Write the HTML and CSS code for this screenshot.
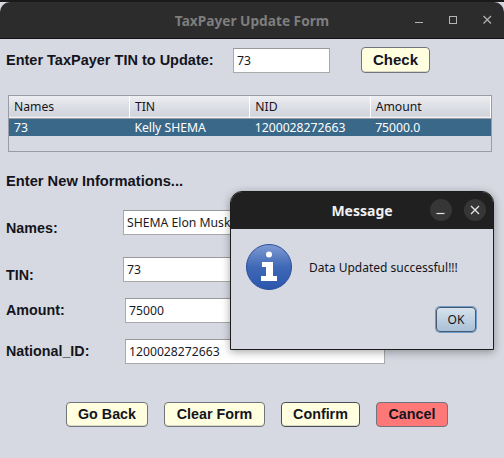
FILE: index.html
```html
<!DOCTYPE html>
<html lang="en">
<head>
    <meta charset="UTF-8">
    <meta name="viewport" content="width=device-width, initial-scale=1.0">
    <title>TaxPayer Update Form</title>
    <link rel="stylesheet" href="styles.css">
</head>
<body>
    <div class="window">
        <!-- Title bar -->
        <div class="titlebar">
            <span class="title">TaxPayer Update Form</span>
            <div class="win-controls">
                <svg width="16" height="16" viewBox="0 0 16 16"><path d="M0 7.500h8" stroke="#b4b4b4" stroke-width="1"/></svg>
                <svg width="16" height="16" viewBox="0 0 16 16"><rect x="0.500" y="1.500" width="7" height="7" fill="none" stroke="#b4b4b4"/></svg>
                <svg width="16" height="16" viewBox="0 0 16 16"><path d="M0.500 1l7.500 7.500M8 1l-7.500 7.500" stroke="#b4b4b4" stroke-width="1.200"/></svg>
            </div>
        </div>

        <!-- Search -->
        <div class="search-row">
            <label class="label search-label">Enter TaxPayer TIN to Update:</label>
            <input class="field search-field" type="text" value="73">
            <button class="btn check-btn">Check</button>
        </div>

        <!-- Table -->
        <div class="table-box">
            <table>
                <thead>
                    <tr>
                        <th>Names</th>
                        <th>TIN</th>
                        <th>NID</th>
                        <th>Amount</th>
                    </tr>
                </thead>
                <tbody>
                    <tr>
                        <td>73</td>
                        <td>Kelly SHEMA</td>
                        <td>1200028272663</td>
                        <td>75000.0</td>
                    </tr>
                </tbody>
            </table>
        </div>

        <h2 class="label heading">Enter New Informations...</h2>

        <!-- Form -->
        <div class="form-row row-names">
            <label class="label row-label">Names:</label>
            <input class="field left-123" type="text" value="SHEMA Elon Musk">
        </div>
        <div class="form-row row-tin">
            <label class="label row-label">TIN:</label>
            <input class="field left-123" type="text" value="73">
        </div>
        <div class="form-row row-amount">
            <label class="label row-label">Amount:</label>
            <input class="field left-125" type="text" value="75000">
        </div>
        <div class="form-row row-nid">
            <label class="label row-label">National_ID:</label>
            <input class="field left-125" type="text" value="1200028272663">
        </div>

        <!-- Buttons -->
        <div class="actions">
            <button class="btn btn-back">Go Back</button>
            <button class="btn btn-clear">Clear Form</button>
            <button class="btn btn-confirm">Confirm</button>
            <button class="btn btn-cancel">Cancel</button>
        </div>

        <!-- Message dialog -->
        <div class="dialog">
            <div class="dialog-bar">
                <span class="dialog-title">Message</span>
                <span class="round-btn round-min">
                    <svg width="22" height="22" viewBox="0 0 22 22"><path d="M6.500 14.500h8" stroke="#e6e6e6" stroke-width="1.200"/></svg>
                </span>
                <span class="round-btn round-close">
                    <svg width="22" height="22" viewBox="0 0 22 22"><path d="M7 7l8 8M15 7l-8 8" stroke="#e6e6e6" stroke-width="1.300"/></svg>
                </span>
            </div>
            <div class="dialog-body">
                <svg class="info-icon" width="46" height="46" viewBox="0 0 46 46">
                    <defs>
                        <linearGradient id="info-fill" x1="0" y1="0" x2="0" y2="1">
                            <stop offset="0" stop-color="#7f9bd2"/>
                            <stop offset="0.500" stop-color="#3f68b6"/>
                            <stop offset="1" stop-color="#2b56ad"/>
                        </linearGradient>
                    </defs>
                    <circle cx="23" cy="23" r="22.500" fill="url(#info-fill)" stroke="#2a4f9c"/>
                    <circle cx="23" cy="10.500" r="3" fill="#fff"/>
                    <path d="M16 18h11v14h4v5H15v-5h5v-9h-4z" fill="#fff"/>
                </svg>
                <span class="dialog-text">Data Updated successful!!!</span>
            </div>
            <div class="dialog-actions">
                <button class="ok-btn">OK</button>
            </div>
        </div>
    </div>
</body>
</html>
```

FILE: styles.css
```css
* {
    box-sizing: border-box;
}

html, body {
    margin: 0;
    padding: 0;
    background-color: #1a1a1a;
}

.window {
    position: relative;
    width: 504px;
    height: 458px;
    padding-top: 2px;
    background-color: #d6d9e1;
    background-clip: content-box;
    font-family: "Noto Sans", sans-serif;
    overflow: hidden;
}

/* Title bar */
.titlebar {
    height: 37px;
    background-color: #2c2c2c;
    border-bottom: 1px solid #111;
    border-radius: 10px 10px 0 0;
    display: flex;
    align-items: center;
    justify-content: center;
}

.title {
    font-size: 13.700px;
    font-weight: bold;
    color: #7e7e7e;
}

.win-controls {
    position: absolute;
    top: 15px;
    left: 415px;
    display: flex;
    gap: 18px;
}

.win-controls svg {
    display: block;
}

/* Shared pieces */
.label {
    font-family: "Liberation Sans", Arial, sans-serif;
    font-size: 14.300px;
    font-weight: bold;
    color: #14141c;
}

.field {
    height: 25px;
    padding: 0 3px;
    border: 1px solid #a9a9a9;
    border-top-color: #999;
    background-color: #fff;
    font-family: "Noto Sans", sans-serif;
    font-size: 12.200px;
    color: #1a1a24;
    outline: none;
}

.btn {
    height: 25px;
    padding: 0 0 2px;
    border: 1px solid #70747c;
    border-radius: 4px;
    background-color: #ffffe0;
    font-family: "Liberation Sans", Arial, sans-serif;
    font-size: 14.300px;
    font-weight: bold;
    color: #14141c;
    box-shadow: inset 0 -1px 0 #d8d8c4;
}

/* Search */
.search-row {
    display: flex;
    align-items: center;
    height: 26px;
    margin-top: 8px;
    padding-left: 6px;
}

.search-label {
    width: 227px;
    font-size: 14.500px;
}

.search-field {
    width: 97px;
}

.check-btn {
    width: 69px;
    height: 26px;
    margin-left: 31px;
    font-size: 15px;
}

/* Table */
.table-box {
    width: 484px;
    height: 57px;
    margin: 22px 0 0 8px;
    border: 1px solid #9a9ca5;
}

table {
    width: 100%;
    border-collapse: collapse;
    table-layout: fixed;
    font-size: 12.200px;
    color: #14141c;
}

th {
    height: 22px;
    padding: 0 5px;
    font-weight: normal;
    text-align: left;
    background: linear-gradient(#eceef2, #dcdee5 50%, #d2d4dc 90%, #fafafa);
    border-right: 1px solid #fff;
    border-bottom: 1px solid #9a9ca5;
}

td {
    height: 17px;
    padding: 0 5px;
    background-color: #3a6889;
    color: #fff;
}

/* Form */
.heading {
    margin: 21px 0 0;
    padding-left: 6px;
    height: 17px;
    line-height: 17px;
    font-size: 14.700px;
}

.form-row {
    display: flex;
    align-items: flex-start;
    height: 25px;
    padding-left: 6px;
}

.row-label {
    width: 117px;
    flex: none;
}

.row-names { margin-top: 20px; }
.row-tin { margin-top: 22px; }
.row-amount { margin-top: 16px; }
.row-nid { margin-top: 16px; }

.row-names .row-label { margin-top: 10px; }
.row-tin .row-label { margin-top: 10px; }
.row-amount .row-label,
.row-nid .row-label { margin-top: 4px; }

.left-123 { width: 262px; }

.left-125 {
    width: 260px;
    margin-left: 2px;
}

/* Buttons */
.actions {
    display: flex;
    gap: 16px;
    margin-top: 38px;
    padding-left: 66px;
}

.btn-back { width: 82px; }
.btn-clear { width: 101px; }
.btn-confirm { width: 79px; border-color: #4a4e56; }
.btn-cancel { width: 72px; background-color: #ff7878; box-shadow: none; }

/* Message dialog */
.dialog {
    position: absolute;
    left: 230px;
    top: 191px;
    width: 264px;
    height: 159px;
    background-color: #d6d9e1;
    border: 1px solid #1c1c1c;
    border-radius: 12px 12px 0 0;
    box-shadow: 0 2px 8px rgba(0, 0, 0, 0.35);
}

.dialog-bar {
    position: relative;
    height: 37px;
    background-color: #202020;
    border-radius: 11px 11px 0 0;
    display: flex;
    align-items: center;
    justify-content: center;
}

.dialog-title {
    font-size: 14px;
    font-weight: bold;
    color: #f0f0f0;
}

.round-btn {
    position: absolute;
    top: 7px;
    width: 22px;
    height: 22px;
    border-radius: 50%;
    background-color: #363636;
}

.round-btn svg {
    display: block;
}

.round-min { left: 199px; }
.round-close { left: 233px; }

.dialog-body {
    display: flex;
    align-items: center;
    padding: 15px 0 0 15px;
}

.info-icon {
    display: block;
    flex: none;
}

.dialog-text {
    margin-left: 17px;
    font-size: 12px;
    color: #14141c;
}

.dialog-actions {
    display: flex;
    justify-content: flex-end;
    margin-top: 17px;
    padding-right: 17px;
}

.ok-btn {
    width: 40px;
    height: 25px;
    padding: 0;
    border: 1px solid #47596e;
    border-radius: 4px;
    background: linear-gradient(#d6e2ec, #a9c0d6);
    box-shadow: 0 0 0 1px #6f9cc8;
    font-family: "Noto Sans", sans-serif;
    font-size: 12px;
    color: #14141c;
}
```
